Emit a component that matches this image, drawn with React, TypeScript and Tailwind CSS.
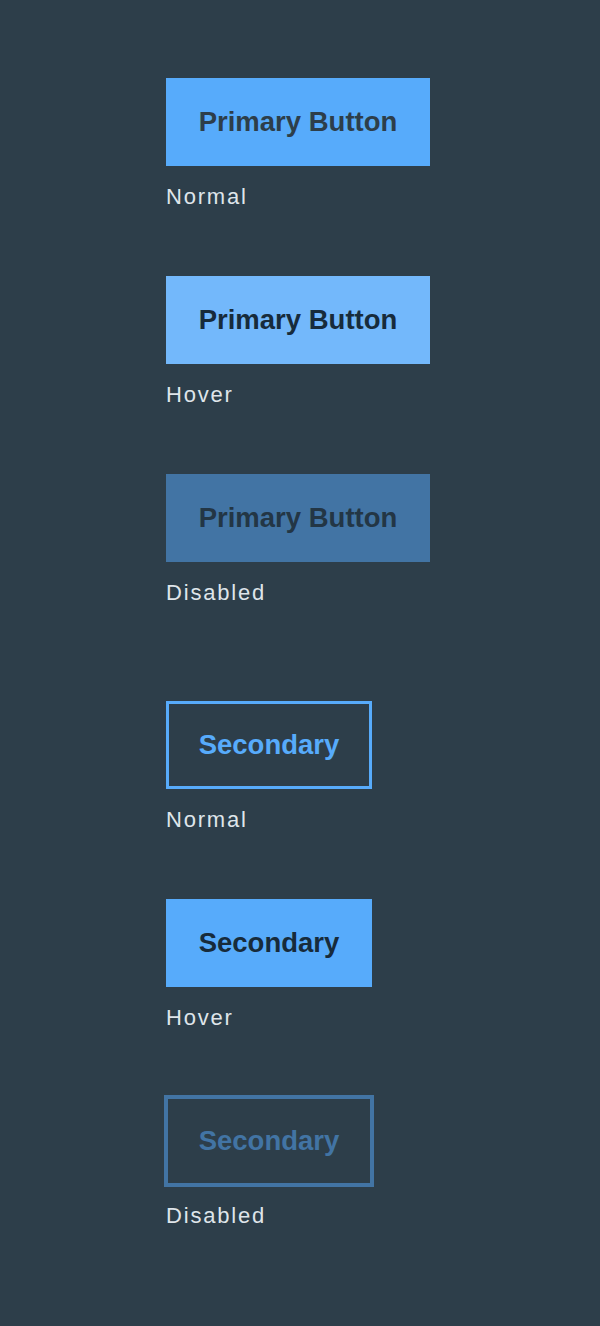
import React from "react";

const btnText = "font-bold text-[27.5px] leading-none pb-[1px]";

function Label({ children }: { children: React.ReactNode }) {
  return (
    <div className="mt-[18px] h-[26px] text-[22px] leading-[26px] tracking-[1.8px] text-[#dfe5ea]">
      {children}
    </div>
  );
}

export default function App() {
  return (
    <div
      className="min-h-[1326px] w-full bg-[#2d3e4a] pl-[166px] pt-[78px]"
      style={{ fontFamily: '"Liberation Sans", Arial, sans-serif' }}
    >
      <div className="flex flex-col">
        <div className="mb-[66px]">
          <div className={`flex h-[88px] w-[264px] items-center justify-center bg-[#57abfb] text-[#2d3e4a] ${btnText}`}>
            Primary Button
          </div>
          <Label>Normal</Label>
        </div>
        <div className="mb-[66px]">
          <div className={`flex h-[88px] w-[264px] items-center justify-center bg-[#73b8fb] text-[#172b3b] ${btnText}`}>
            Primary Button
          </div>
          <Label>Hover</Label>
        </div>
        <div className="mb-[95px]">
          <div className={`flex h-[88px] w-[264px] items-center justify-center bg-[#4274a4] text-[#233645] ${btnText}`}>
            Primary Button
          </div>
          <Label>Disabled</Label>
        </div>

        <div className="mb-[66px]">
          <div className={`flex h-[88px] w-[206px] items-center justify-center border-[3px] border-[#57abfb] text-[#57abfb] ${btnText}`}>
            Secondary
          </div>
          <Label>Normal</Label>
        </div>
        <div className="mb-[66px]">
          <div className={`flex h-[88px] w-[206px] items-center justify-center bg-[#57abfb] text-[#172b3b] ${btnText}`}>
            Secondary
          </div>
          <Label>Hover</Label>
        </div>
        <div>
          <div className={`-m-[2px] flex h-[92px] w-[210px] items-center justify-center border-[4px] border-[#4274a4] text-[#4274a4] ${btnText}`}>
            Secondary
          </div>
          <Label>Disabled</Label>
        </div>
      </div>
    </div>
  );
}
